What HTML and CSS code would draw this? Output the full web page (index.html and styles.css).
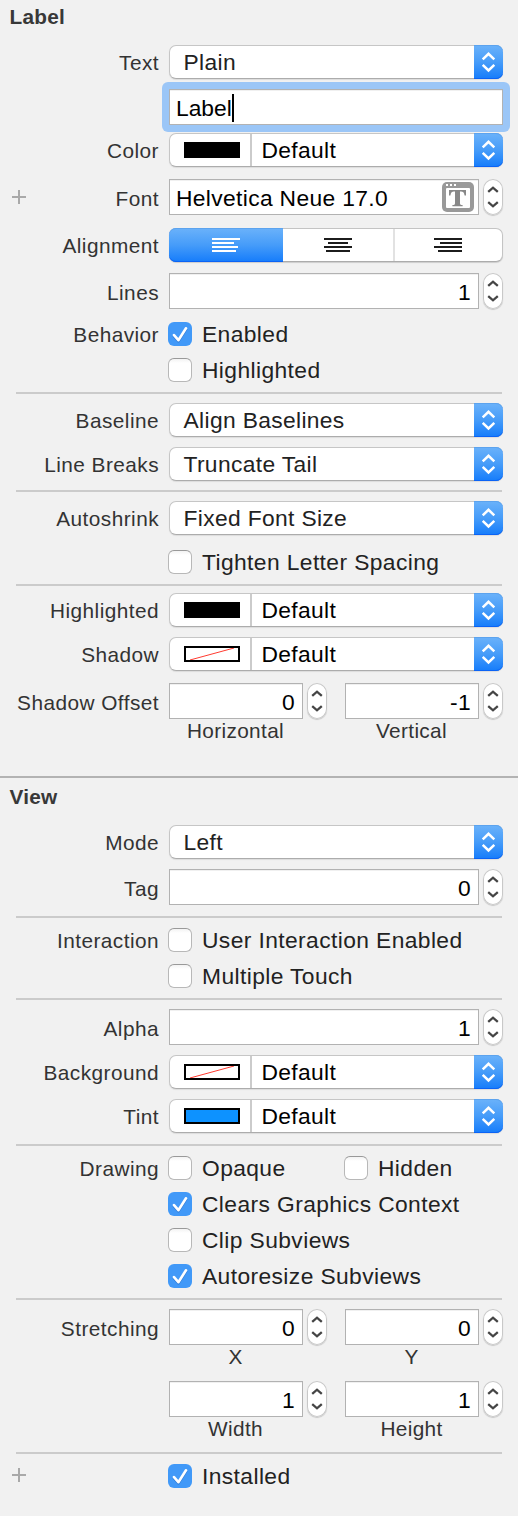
FILE: index.html
```html
<!DOCTYPE html>
<html lang="en">
<head>
<meta charset="utf-8">
<title>Attributes Inspector</title>
<link rel="stylesheet" href="styles.css">
</head>
<body>
<svg width="0" height="0" class="defs">
  <symbol id="updown" viewBox="0 0 29 34"><path d="M8.7 14.4 14.5 8.8l5.800 5.600M8.700 19.800l5.800 5.600 5.800-5.600" fill="none" stroke="#fff" stroke-width="2.5"/></symbol>
  <symbol id="step" viewBox="0 0 20 36"><path d="M5.200 12.900 10 8.700l4.800 4.200M5.200 23.100l4.800 4.200 4.800-4.200" fill="none" stroke="#454545" stroke-width="2.3"/></symbol>
  <symbol id="tick" viewBox="0 0 24 24"><path d="M6 13.1l4.400 5.100L18 6.300" fill="none" stroke="#fff" stroke-width="2.6" stroke-linecap="round" stroke-linejoin="round"/></symbol>
  <symbol id="plus" viewBox="0 0 14 14"><path d="M7 0v14M0 7h14" fill="none" stroke="#a9a9a9" stroke-width="2"/></symbol>
</svg>
<main class="inspector">
  <section class="group">
    <h2 class="title">Label</h2>
    <div class="row"><span class="label">Text</span><div class="select"><span class="value">Plain</span><svg class="arrows"><use href="#updown"/></svg></div></div>
    <div class="row tall mt10"><span class="label"></span><div class="halo"><div class="field wide"><span class="edit">Label</span></div></div></div>
    <div class="row mt8"><span class="label">Color</span><div class="select well"><span class="swatch"><i class="chip black"></i></span><span class="value">Default</span><svg class="arrows"><use href="#updown"/></svg></div></div>
    <div class="row tall mt12"><svg class="plus"><use href="#plus"/></svg><span class="label">Font</span><div class="field font"><span>Helvetica Neue 17.0</span>
      <svg class="fonticon" viewBox="0 0 32 30"><rect width="32" height="30" rx="5" fill="#999"/><rect x="4" y="6" width="24" height="20" rx="1" fill="#fff"/><path d="M4 2h2v2H4zM8 2h2v2H8zM12 2h2v2h-2z" fill="#fff"/><path d="M7 8h17v5.4h-1.4c-.5-2.8-1.6-3.8-3.6-3.8h-1v11.6c0 1.3.7 1.8 2.6 1.8v1.2h-10.200v-1.2c1.900 0 2.600-.5 2.600-1.800v-11.600h-1c-2 0-3.100 1-3.600 3.800h-1.400z" fill="#888"/></svg></div><svg class="stepper"><use href="#step"/></svg></div>
    <div class="row mt13"><span class="label">Alignment</span><div class="segments">
      <span class="segment on"><svg viewBox="0 0 28 14"><path d="M0 1h28M0 5h22M0 9h26M0 13h24"/></svg></span>
      <span class="segment"><svg viewBox="0 0 28 14"><path d="M0 1h28M4 5h20M0 9h28M2 13h24"/></svg></span>
      <span class="segment"><svg viewBox="0 0 28 14"><path d="M0 1h28M6 5h22M0 9h28M4 13h24"/></svg></span></div></div>
    <div class="row tall mt11"><span class="label">Lines</span><div class="field number">1</div><svg class="stepper"><use href="#step"/></svg></div>
    <div class="row short mt13"><span class="label">Behavior</span><span class="box on"><svg><use href="#tick"/></svg></span><span class="option">Enabled</span></div>
    <div class="row short mt12"><span class="label"></span><span class="box"></span><span class="option">Highlighted</span></div>
    <hr class="rule mt10">
    <div class="row mt9"><span class="label">Baseline</span><div class="select"><span class="value">Align Baselines</span><svg class="arrows"><use href="#updown"/></svg></div></div>
    <div class="row mt10"><span class="label">Line Breaks</span><div class="select"><span class="value">Truncate Tail</span><svg class="arrows"><use href="#updown"/></svg></div></div>
    <hr class="rule mt9">
    <div class="row mt9"><span class="label">Autoshrink</span><div class="select"><span class="value">Fixed Font Size</span><svg class="arrows"><use href="#updown"/></svg></div></div>
    <div class="row short mt15"><span class="label"></span><span class="box"></span><span class="option">Tighten Letter Spacing</span></div>
    <hr class="rule mt10">
    <div class="row mt7"><span class="label">Highlighted</span><div class="select well"><span class="swatch"><i class="chip black"></i></span><span class="value">Default</span><svg class="arrows"><use href="#updown"/></svg></div></div>
    <div class="row mt10"><span class="label">Shadow</span><div class="select well"><span class="swatch"><svg class="chip none"><path d="M4 12 48 0"/></svg></span><span class="value">Default</span><svg class="arrows"><use href="#updown"/></svg></div></div>
    <div class="row tall mt12"><span class="label">Shadow Offset</span><div class="field number half">0</div><svg class="stepper"><use href="#step"/></svg><div class="field number half second">-1</div><svg class="stepper"><use href="#step"/></svg></div>
    <div class="captions"><span>Horizontal</span><span>Vertical</span></div>
  </section>
  <section class="group view">
    <h2 class="title">View</h2>
    <div class="row"><span class="label">Mode</span><div class="select"><span class="value">Left</span><svg class="arrows"><use href="#updown"/></svg></div></div>
    <div class="row tall mt10"><span class="label">Tag</span><div class="field number">0</div><svg class="stepper"><use href="#step"/></svg></div>
    <hr class="rule mt11">
    <div class="row short mt10"><span class="label">Interaction</span><span class="box"></span><span class="option">User Interaction Enabled</span></div>
    <div class="row short mt12"><span class="label"></span><span class="box"></span><span class="option">Multiple Touch</span></div>
    <hr class="rule mt10">
    <div class="row tall mt9"><span class="label">Alpha</span><div class="field number">1</div><svg class="stepper"><use href="#step"/></svg></div>
    <div class="row mt10"><span class="label">Background</span><div class="select well"><span class="swatch"><svg class="chip none"><path d="M4 12 48 0"/></svg></span><span class="value">Default</span><svg class="arrows"><use href="#updown"/></svg></div></div>
    <div class="row mt10"><span class="label">Tint</span><div class="select well"><span class="swatch"><i class="chip blue"></i></span><span class="value">Default</span><svg class="arrows"><use href="#updown"/></svg></div></div>
    <hr class="rule mt11">
    <div class="row short mt10"><span class="label">Drawing</span><span class="box"></span><span class="option first">Opaque</span><span class="box"></span><span class="option">Hidden</span></div>
    <div class="row short mt12"><span class="label"></span><span class="box on"><svg><use href="#tick"/></svg></span><span class="option">Clears Graphics Context</span></div>
    <div class="row short mt12"><span class="label"></span><span class="box"></span><span class="option">Clip Subviews</span></div>
    <div class="row short mt12"><span class="label"></span><span class="box on"><svg><use href="#tick"/></svg></span><span class="option">Autoresize Subviews</span></div>
    <hr class="rule mt10">
    <div class="row tall mt9"><span class="label">Stretching</span><div class="field number half">0</div><svg class="stepper"><use href="#step"/></svg><div class="field number half second">0</div><svg class="stepper"><use href="#step"/></svg></div>
    <div class="captions"><span>X</span><span>Y</span></div>
    <div class="row tall"><span class="label"></span><div class="field number half">1</div><svg class="stepper"><use href="#step"/></svg><div class="field number half second">1</div><svg class="stepper"><use href="#step"/></svg></div>
    <div class="captions last"><span>Width</span><span>Height</span></div>
    <hr class="rule">
    <div class="row short mt10"><svg class="plus"><use href="#plus"/></svg><span class="label"></span><span class="box on"><svg><use href="#tick"/></svg></span><span class="option">Installed</span></div>
  </section>
</main>
</body>
</html>
```

FILE: styles.css
```css
* { box-sizing: border-box; }
body {
  margin: 0;
  background: #f1f1f1;
  color: #222;
  font: 22.8px "Liberation Sans", Arial, sans-serif;
  letter-spacing: 0.4px;
}
svg { display: block; flex: none; }
.defs { display: none; }
.inspector { width: 518px; height: 1516px; overflow: hidden; }
.group { display: flex; flex-direction: column; }
.group.view { border-top: 2px solid #b3b3b3; }
.title {
  margin: 0;
  height: 45px;
  padding-left: 9.5px;
  font-size: 20.8px;
  line-height: 34px;
  letter-spacing: 0.25px;
  color: #383838;
}
.view .title { height: 47px; line-height: 38px; }

.row { display: flex; height: 34px; line-height: 34px; padding-right: 15px; white-space: nowrap; }
.row.tall { height: 36px; line-height: 37px; }
.row.short { height: 24px; padding-right: 25px; line-height: 24px; }
.label {
  flex: 1;
  padding-top: 1px;
  margin-right: 10px;
  text-align: right;
  font-size: 20.8px;
  letter-spacing: 0.45px;
  color: #333;
}
.short .label { margin-right: 9px; }
.plus { width: 14px; height: 14px; margin: 11px -26px 0 12px; }
.short .plus { margin-top: 4px; }
.rule { width: 486px; height: 2px; margin: 0 0 0 16px; border: 0; background: #cbcbcb; }

.select {
  display: flex;
  width: 334px;
  height: 34px;
  border: 1px solid #c6c6c6;
  border-bottom-color: #acacac;
  border-right: 0;
  border-radius: 7px;
  background: #fff;
  box-shadow: 0 1px 1px rgba(0, 0, 0, 0.09);
}
.value { flex: 1; padding-left: 13.5px; line-height: 32px; letter-spacing: 0.35px; }
.arrows {
  width: 29px;
  height: 34px;
  margin-top: -1px;
  border-radius: 0 7px 7px 0;
  background: linear-gradient(#6bb2fa, #469cf9 50%, #157cfb);
  box-shadow: inset 0 1px #5ca3ee, inset 0 -1px #0b63f5;
}
.well .value { padding-left: 9.5px; color: #000; }
.swatch { width: 82px; padding: 8px 0 0 14px; border-right: 2px solid #cbcbcb; }
.chip { display: block; width: 56px; height: 16px; border: 2px solid #000; }
.chip.black { background: #000; }
.chip.blue { background: #0d92ff; }
.chip.none path { stroke: #ff3b30; stroke-width: 1; }

.field {
  flex: none;
  display: flex;
  width: 310px;
  height: 36px;
  padding: 0 6px;
  border: 1px solid #b2b2b2;
  background: #fff;
  box-shadow: inset 0 1px #f0f0f0;
  color: #000;
}
.field.number { justify-content: flex-end; padding-right: 7px; }
.field.wide { width: 334px; }
.halo { height: 50px; margin: -7px; padding: 7px; border-radius: 6px; background: #9bc6f7; }
.edit { height: 28px; margin-top: 4px; line-height: 29px; border-right: 2px solid #000; letter-spacing: 0; }
.font { justify-content: space-between; line-height: 36px; padding-right: 4px; letter-spacing: 0.35px; }
.fonticon { width: 32px; height: 30px; margin-top: 2px; }
.stepper {
  width: 20px;
  height: 36px;
  margin-left: 4px;
  border-radius: 10px;
  background: #fff;
  box-shadow: inset 0 0 0 1px #c8c8c8, 0 1px 1px rgba(0, 0, 0, 0.18);
}
.half { width: 134px; }
.second { margin-left: 18px; }

.segments {
  display: flex;
  width: 334px;
  height: 34px;
  border: 1px solid #c4c4c4;
  border-bottom-color: #acacac;
  border-radius: 7px;
  background: #fff;
  box-shadow: 0 1px 1px rgba(0, 0, 0, 0.15);
}
.segment { flex: none; width: 112px; padding: 9px 0 0 41px; border-right: 2px solid #e2e2e2; }
.segment svg { width: 28px; height: 14px; stroke: #1c1c1c; stroke-width: 2; }
.segment:last-child { border: 0; width: 108px; padding-left: 39px; }
.segment.on {
  width: 114px;
  height: 34px;
  margin: -1px 0 0 -1px;
  padding: 10px 0 0 43px;
  border: 0;
  border-radius: 7px 0 0 7px;
  background: linear-gradient(#6bb2fa, #469cf9 50%, #157cfb);
  box-shadow: inset 0 1px #5ca3ee, inset 0 -1px #0b63f5;
}
.segment.on svg { stroke: #fff; }

.box {
  flex: none;
  width: 24px;
  height: 24px;
  border: 1px solid #b8b8b8;
  border-top-color: #999;
  border-radius: 6px;
  background: linear-gradient(#f3f3f3, #fff 4px);
}
.box.on { border: 0; background: #4199f8; }
.box.on svg { width: 24px; height: 24px; filter: drop-shadow(0 1px 0.5px rgba(0, 60, 150, 0.35)); }
.option { width: 301px; padding-left: 10px; }
.option.first { width: 152px; }
.first ~ .option { width: 125px; }

.captions { display: flex; height: 57px; padding-left: 168.5px; font-size: 20.8px; line-height: 24px; letter-spacing: 0.35px; color: #333; }
.captions span { width: 134px; margin-right: 42px; text-align: center; }
.view .captions { height: 36px; }
.view .captions.last { height: 35px; }
.captions span:last-child { margin-right: 0; }

.mt7 { margin-top: 7px; }
.mt8 { margin-top: 8px; }
.mt9 { margin-top: 9px; }
.mt10 { margin-top: 10px; }
.mt11 { margin-top: 11px; }
.mt12 { margin-top: 12px; }
.mt13 { margin-top: 13px; }
.mt15 { margin-top: 15px; }
```
